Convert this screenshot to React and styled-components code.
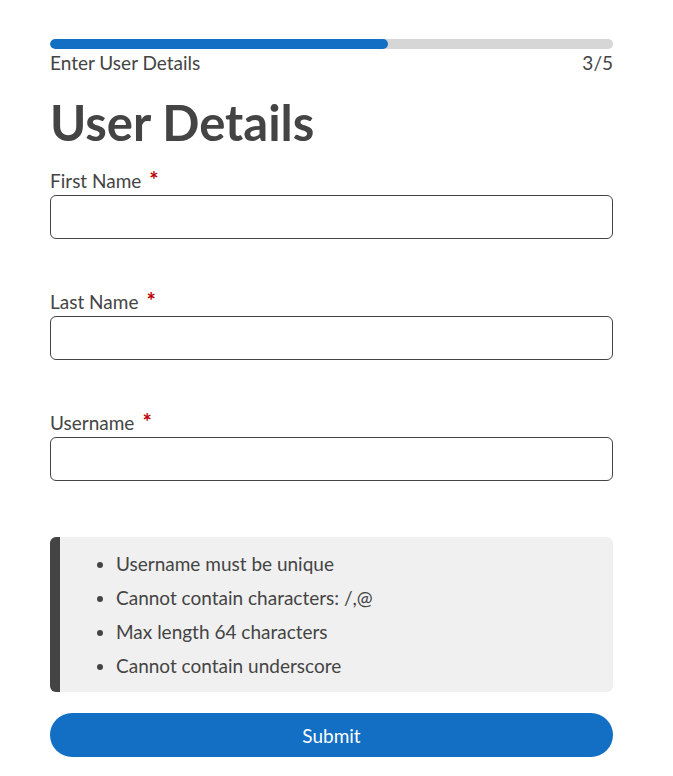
import React from "react";
import styled, { createGlobalStyle } from "styled-components";

const Global = createGlobalStyle`
  body {
    margin: 0;
    background: #fff;
    font-family: "Lato", "Liberation Sans", sans-serif;
    color: #444;
  }
`;

const Page = styled.div`
  width: 563px;
  margin: 0 0 0 50px;
  padding-top: 39px;
`;

const Track = styled.div`
  height: 10px;
  border-radius: 5px;
  background: #d6d6d6;
  overflow: hidden;
`;

const Fill = styled.div`
  height: 100%;
  border-radius: 5px;
  background: #126fc4;
`;

const StepRow = styled.div`
  display: flex;
  justify-content: space-between;
  font-size: 19px;
  line-height: 22px;
  margin-top: 3px;
`;

const Title = styled.h1`
  margin: 20px 0 0;
  font-size: 49px;
  line-height: 56px;
  font-weight: 700;
  color: #444;
`;

const Field = styled.div`
  display: flex;
  flex-direction: column;
  margin-top: ${(p) => p.$gap}px;
`;

const Label = styled.label`
  font-size: 19px;
  line-height: 22px;
  margin-bottom: 3px;
`;

const Req = styled.span`
  color: #b80000;
  font-weight: 700;
  font-size: 22px;
  line-height: 0;
  margin-left: 8px;
`;

const Input = styled.input`
  box-sizing: border-box;
  height: 44px;
  border: 1px solid #444;
  border-radius: 6px;
  padding: 0 12px;
  font: inherit;
  font-size: 19px;
  outline: none;
`;

const Notes = styled.ul`
  margin: 56px 0 0;
  padding: 10px 0 9px 56px;
  background: #f0f0f0;
  border-left: 10px solid #444;
  border-radius: 6px;
  list-style: disc;
  font-size: 19px;
  line-height: 34px;
`;

const Submit = styled.button`
  display: block;
  width: 100%;
  height: 44px;
  margin-top: 21px;
  border: none;
  border-radius: 22px;
  background: #126fc4;
  color: #fff;
  font: inherit;
  font-size: 19px;
`;

const fields = [
  { label: "First Name", gap: 20 },
  { label: "Last Name", gap: 52 },
  { label: "Username", gap: 52 },
];

const rules = [
  "Username must be unique",
  "Cannot contain characters: /,@",
  "Max length 64 characters",
  "Cannot contain underscore",
];

export default function App() {
  const step = 3;
  const total = 5;
  return (
    <Page>
      <Global />
      <Track>
        <Fill style={{ width: `${(step / total) * 100}%` }} />
      </Track>
      <StepRow>
        <span>Enter User Details</span>
        <span>
          {step}/{total}
        </span>
      </StepRow>
      <Title>User Details</Title>
      {fields.map((f) => (
        <Field key={f.label} $gap={f.gap}>
          <Label>
            {f.label}
            <Req>*</Req>
          </Label>
          <Input type="text" />
        </Field>
      ))}
      <Notes>
        {rules.map((r) => (
          <li key={r}>{r}</li>
        ))}
      </Notes>
      <Submit>Submit</Submit>
    </Page>
  );
}
